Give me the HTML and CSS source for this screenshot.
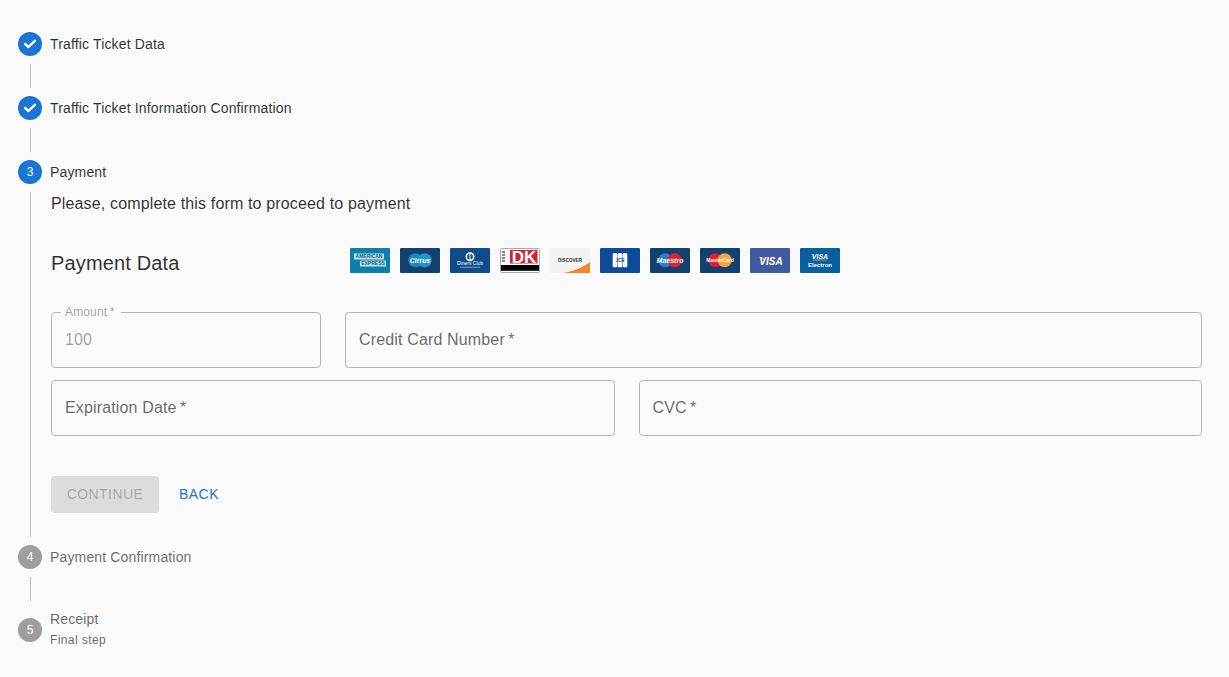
FILE: index.html
```html
<!DOCTYPE html>
<html lang="en">
<head>
  <meta charset="UTF-8">
  <title>Payment</title>
  <link rel="stylesheet" href="styles.css">
</head>

<body>
  <div class="stepper">
    <div class="step">
      <svg class="step-icon" viewBox="0 0 24 24"><circle cx="12" cy="12" r="12" fill="#1976d2"/><path class="tick" d="M7.2 12 10.4 15 16.8 8.8"/></svg>
      <span class="step-label">Traffic Ticket Data</span>
    </div>
    <div class="connector"></div>
    <div class="step">
      <svg class="step-icon" viewBox="0 0 24 24"><circle cx="12" cy="12" r="12" fill="#1976d2"/><path class="tick" d="M7.2 12 10.4 15 16.8 8.8"/></svg>
      <span class="step-label">Traffic Ticket Information Confirmation</span>
    </div>
    <div class="connector"></div>
    <div class="step">
      <span class="step-num active">3</span>
      <span class="step-label">Payment</span>
    </div>

    <div class="step-content">
      <p class="intro">Please, complete this form to proceed to payment</p>

      <div class="payment-head">
        <h2>Payment Data</h2>
        <div class="cards">
          <!-- amex -->
          <svg class="card" viewBox="0 0 40 25">
            <rect width="40" height="25" rx="1" fill="#0d7fac"/>
            <rect x="4" y="5.5" width="30" height="6" fill="#fff" opacity=".75"/>
            <rect x="10" y="12.5" width="26" height="6" fill="#fff" opacity=".75"/>
            <text x="19" y="10.4" class="t-amex" fill="#0b5f86">AMERICAN</text>
            <text x="23" y="17.4" class="t-amex" fill="#0b5f86">EXPRESS</text>
          </svg>
          <!-- cirrus -->
          <svg class="card" viewBox="0 0 40 25">
            <rect width="40" height="25" rx="1" fill="#12406f"/>
            <circle cx="15.3" cy="12.3" r="7" fill="#1d86c0"/>
            <circle cx="24.7" cy="12.3" r="7" fill="#1d96cc"/>
            <text x="20" y="14.6" class="t-card" fill="#fff">Cirrus</text>
          </svg>
          <!-- diners -->
          <svg class="card" viewBox="0 0 40 25">
            <rect width="40" height="25" rx="1" fill="#0f4c89"/>
            <circle cx="20" cy="8.7" r="4.5" fill="#fff"/>
            <circle cx="20" cy="8.7" r="2.9" fill="#0f4c89"/>
            <rect x="19.5" y="5.4" width="1" height="6.6" fill="#fff"/>
            <text x="20" y="17.4" class="t-diners" fill="#fff">Diners Club</text>
            <rect x="10" y="18.8" width="20" height=".8" fill="#9db6d2"/>
          </svg>
          <!-- dk -->
          <svg class="card" viewBox="0 0 40 25">
            <rect x=".5" y=".5" width="39" height="24" rx="1" fill="#fff" stroke="#aaa"/>
            <rect x="10" y="2" width="27.5" height="13.5" fill="#d2232f"/>
            <rect x="1" y="17" width="38" height="5.8" fill="#000"/>
            <path d="M3.5 3V15" stroke="#888" stroke-width="3" stroke-dasharray="2 1"/>
            <text x="24" y="14.6" class="t-dk" fill="#fff">DK</text>
          </svg>
          <!-- discover -->
          <svg class="card" viewBox="0 0 40 25">
            <rect width="40" height="25" rx="1" fill="#f2f2f2"/>
            <path d="M13 25 C24 23 34 19 40 14 V24 a1 1 0 0 1 -1 1z" fill="#f58426"/>
            <text x="20" y="13.6" class="t-disc" fill="#333">DISCOVER</text>
          </svg>
          <!-- jcb -->
          <svg class="card" viewBox="0 0 40 25">
            <rect width="40" height="25" rx="1" fill="#0d4a97"/>
            <rect x="12.7" y="5.3" width="4.6" height="14" rx="1" fill="#fff"/>
            <rect x="17.7" y="5.3" width="4.6" height="14" rx="1" fill="#fff"/>
            <rect x="22.7" y="5.3" width="4.6" height="14" rx="1" fill="#fff"/>
            <text x="20" y="14" class="t-jcb" fill="#0d4a97">JCB</text>
          </svg>
          <!-- maestro -->
          <svg class="card" viewBox="0 0 40 25">
            <rect width="40" height="25" rx="1" fill="#12406f"/>
            <circle cx="15.3" cy="12.3" r="7" fill="#2a7fc4"/>
            <circle cx="24.7" cy="12.3" r="7" fill="#e0202f"/>
            <text x="20" y="14.6" class="t-card" fill="#fff">Maestro</text>
          </svg>
          <!-- mastercard -->
          <svg class="card" viewBox="0 0 40 25">
            <rect width="40" height="25" rx="1" fill="#12406f"/>
            <circle cx="15.3" cy="12.3" r="7" fill="#e0202f"/>
            <circle cx="24.7" cy="12.3" r="7" fill="#f5a53a"/>
            <text x="20" y="14" class="t-mc" fill="#fff">MasterCard</text>
          </svg>
          <!-- visa -->
          <svg class="card" viewBox="0 0 40 25">
            <rect width="40" height="25" rx="1" fill="#3f5ba0"/>
            <path d="M8 8.7 L14 9.8 L15 12.4z" fill="#e8a33d"/>
            <text x="21" y="16.6" class="t-visa" fill="#fff">VISA</text>
          </svg>
          <!-- visa electron -->
          <svg class="card" viewBox="0 0 40 25">
            <rect width="40" height="25" rx="1" fill="#0a5f9f"/>
            <text x="20" y="10.8" class="t-ve" fill="#fff">VISA</text>
            <rect x="13" y="11.6" width="14" height=".8" fill="#e8a33d"/>
            <text x="20" y="19.4" class="t-el" fill="#fff">Electron</text>
          </svg>
        </div>
      </div>

      <div class="fields">
        <div class="row row-first">
          <div class="field disabled">
            <span class="float-label">Amount&thinsp;*</span>
            <span class="value">100</span>
          </div>
          <div class="field"><span class="placeholder">Credit Card Number&thinsp;*</span></div>
        </div>
        <div class="row row-second">
          <div class="field"><span class="placeholder">Expiration Date&thinsp;*</span></div>
          <div class="field"><span class="placeholder">CVC&thinsp;*</span></div>
        </div>
      </div>

      <div class="actions">
        <button class="btn-continue" type="button" disabled>CONTINUE</button>
        <button class="btn-back" type="button">BACK</button>
      </div>
    </div>

    <div class="step">
      <span class="step-num">4</span>
      <span class="step-label muted">Payment Confirmation</span>
    </div>
    <div class="connector"></div>
    <div class="step">
      <span class="step-num">5</span>
      <span class="step-label muted">Receipt<small>Final step</small></span>
    </div>
  </div>
</body>
</html>
```

FILE: styles.css
```css
* {
  box-sizing: border-box;
}
body {
  margin: 0;
  background: #fafafa;
  color: rgba(0, 0, 0, 0.82);
  font-family: "Liberation Sans", Arial, sans-serif;
}
.stepper {
  padding: 24px 27px 24px 18px;
}

/* step header */
.step {
  display: flex;
  align-items: center;
  padding: 8px 0;
}
.step-icon,
.step-num {
  flex: none;
  width: 24px;
  height: 24px;
  margin-right: 8px;
}
.tick {
  fill: none;
  stroke: #fff;
  stroke-width: 2.4;
  stroke-linecap: round;
  stroke-linejoin: round;
}
.step-num {
  display: flex;
  align-items: center;
  justify-content: center;
  border-radius: 50%;
  background: #9e9e9e;
  color: #fff;
  font-size: 12px;
}
.step-num.active {
  background: #1976d2;
}
.step-label {
  font-size: 14px;
  line-height: 20px;
  letter-spacing: 0.15px;
}
.step-label.muted {
  color: rgba(0, 0, 0, 0.6);
}
.step-label small {
  display: block;
  padding-top: 1px;
  font-size: 12px;
  line-height: 20px;
  letter-spacing: 0.4px;
}
.connector {
  height: 24px;
  margin-left: 12px;
  border-left: 1px solid #bdbdbd;
}

/* step 3 content */
.step-content {
  height: 345px;
  margin-left: 12px;
  padding-left: 20px;
  border-left: 1px solid #bdbdbd;
}
.intro {
  margin: 0;
  font-size: 16px;
  line-height: 23px;
  letter-spacing: 0.15px;
}
.payment-head {
  display: flex;
  align-items: center;
  margin-top: 33px;
  height: 25px;
}
.payment-head h2 {
  width: 299px;
  margin: 0;
  font-size: 20px;
  font-weight: 400;
  letter-spacing: 0.15px;
  padding-top: 6px;
}
.cards {
  display: flex;
  gap: 10px;
}
.card {
  width: 40px;
  height: 25px;
  display: block;
}
.cards text {
  text-anchor: middle;
  font-family: "Liberation Sans", Arial, sans-serif;
}
.t-amex { font-size: 5px; font-weight: 700; }
.t-card { font-size: 7px; font-weight: 700; font-style: italic; }
.t-diners { font-size: 5px; }
.t-mc { font-size: 5px; font-weight: 700; }
.t-dk { font-size: 17px; font-weight: 700; }
.t-disc { font-size: 4.6px; font-weight: 700; }
.t-jcb { font-size: 4.5px; font-weight: 700; }
.t-visa { font-size: 10px; font-weight: 700; font-style: italic; }
.t-ve { font-size: 7px; font-weight: 700; font-style: italic; }
.t-el { font-size: 6px; font-weight: 700; }

/* form */
.fields {
  display: grid;
  row-gap: 12px;
  margin-top: 39px;
}
.row {
  display: grid;
  column-gap: 24px;
}
.row-first {
  grid-template-columns: 270px 1fr;
}
.row-second {
  grid-template-columns: 1fr 1fr;
}
.field {
  position: relative;
  display: flex;
  align-items: center;
  height: 56px;
  padding: 0 13px;
  border: 1px solid #b5b5b5;
  border-radius: 4px;
  font-size: 16px;
  letter-spacing: 0.15px;
}
.placeholder {
  color: rgba(0, 0, 0, 0.6);
}
.value {
  color: rgba(0, 0, 0, 0.38);
}
.float-label {
  position: absolute;
  top: -8px;
  left: 9px;
  padding: 0 6px 0 4px;
  background: #fafafa;
  color: rgba(0, 0, 0, 0.38);
  font-size: 12px;
  line-height: 14px;
}

/* buttons */
.actions {
  display: flex;
  align-items: center;
  gap: 8px;
  margin-top: 40px;
}
.actions button {
  height: 37px;
  padding: 0 0 2px;
  border: 0;
  border-radius: 4px;
  font-family: inherit;
  font-size: 14px;
  letter-spacing: 0.45px;
}
.btn-continue {
  width: 108px;
  background: #dcdcdc;
  color: rgba(0, 0, 0, 0.26);
}
.btn-back {
  width: 64px;
  background: none;
  color: #1976d2;
}
```
